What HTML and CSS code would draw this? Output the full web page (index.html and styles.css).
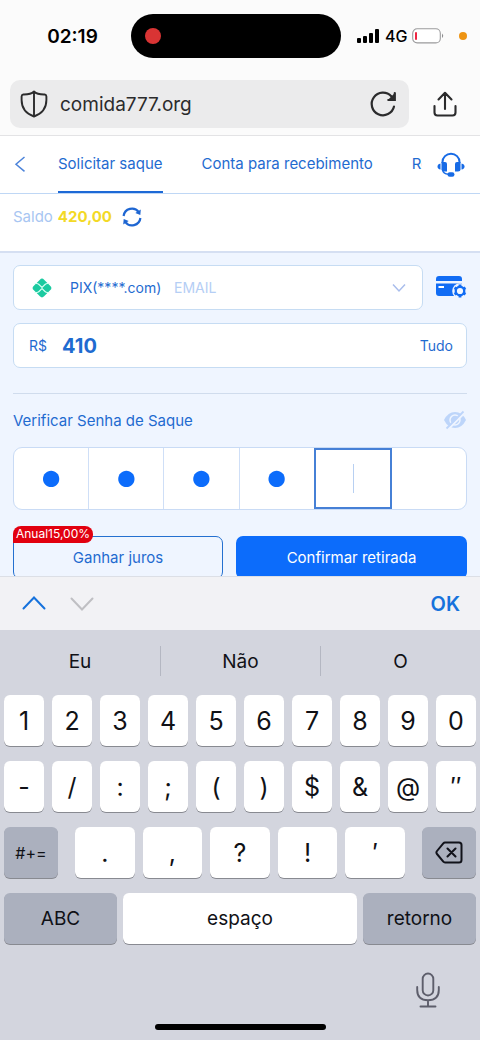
FILE: index.html
```html
<!DOCTYPE html>
<html lang="pt-BR">
<head>
<meta charset="utf-8">
<meta name="viewport" content="width=device-width, initial-scale=1">
<title>Solicitar saque</title>
<link rel="stylesheet" href="styles.css">
</head>
<body>
<div class="app">
  <header class="browser">
    <div class="status">
      <time class="clock">02:19</time>
      <div class="island"><span class="rec"></span></div>
      <div class="signals">
        <svg width="23" height="15" viewBox="0 0 23 15"><rect x="0" y="9" width="4" height="5" rx="1"/><rect x="6" y="7" width="4" height="7" rx="1"/><rect x="12" y="4" width="4" height="10" rx="1"/><rect x="18" y="0" width="4" height="14" rx="1"/></svg>
        <span class="network">4G</span>
        <svg width="32" height="16" viewBox="0 0 32 16"><rect x=".7" y=".7" width="27.6" height="14.2" rx="4.5" fill="#fff" stroke="#9a9a9c" stroke-width="1.1"/><rect x="3" y="4" width="2" height="8" rx="1" fill="#ee2643"/><path d="M30 5.500q2.400 2.300 0 4.600z" fill="#8d8d8f"/></svg>
        <span class="mic-dot"></span>
      </div>
    </div>
    <div class="address-row">
      <div class="address">
        <svg width="28" height="28" viewBox="0 0 28 28" fill="none" stroke="#2b2b2c" stroke-width="1.9" stroke-linejoin="round"><path d="M14 1.500C11.500 4 7.500 4.600 3.200 4.500Q1.600 4.700 1.600 6.500V10c0 8 4 13.500 12.400 16.500C22.400 23.500 26.400 18 26.400 10V6.500q0-1.800-1.600-2C20.500 4.600 16.500 4 14 1.500zM14 2v24"/></svg>
        <input class="url" type="text" value="comida777.org" aria-label="Endereço">
        <button class="icon-button" aria-label="Recarregar"><svg width="28" height="28" viewBox="0 0 28 28" fill="none" stroke="#2b2b2c" stroke-width="2.200" stroke-linecap="round"><path d="M25 16.500A11.300 11.300 0 1 1 22.300 6.300L25 9.300"/><path d="M25.800 3v7h-7z" fill="#2b2b2c" stroke="none"/><path d="M25.800 3v7h-6.500"/></svg></button>
      </div>
      <button class="icon-button" aria-label="Compartilhar"><svg width="24" height="28" viewBox="0 0 24 28" fill="none" stroke="#2b2b2c" stroke-width="2.100" stroke-linecap="round" stroke-linejoin="round"><path d="M12 19V3M5.500 9.500 12 2.800l6.500 6.700M1.500 16v6.500q0 3 3 3h15q3 0 3-3V16"/></svg></button>
    </div>
  </header>

  <nav class="tabs">
    <button class="back" aria-label="Voltar"><svg width="12" height="18" viewBox="0 0 12 18" fill="none" stroke="#4d84da" stroke-width="1.500"><path d="M10.500 1 2 8.200l8.500 7.200"/></svg></button>
    <div class="tab-list">
      <a class="tab active" href="#saque">Solicitar saque</a>
      <a class="tab" href="#conta">Conta para recebimento</a>
      <a class="tab" href="#re">Re</a>
    </div>
    <button class="support" aria-label="Suporte"><svg width="28" height="26" viewBox="0 0 28 26"><path d="M5.500 11V10a8.500 8.300 0 0 1 17 0v1" fill="none" stroke="#176be6" stroke-width="2"/><g fill="#176be6"><path d="M4.500 10H8q2 0 2 2v7.500H7q-2.500 0-2.500-2z"/><path d="M23.500 10H20q-2 0-2 2v7.500h3q2.500 0 2.500-2z"/><path d="M3.500 11.500v6Q.5 17 .5 14.500t3-3z"/><path d="M24.500 11.500v6q3-.5 3-3t-3-3z"/><rect x="10.500" y="20.300" width="7" height="4.400" rx="2.200"/></g><path d="M5.700 18q.3 4 6 4.300" fill="none" stroke="#176be6" stroke-width="1.500"/></svg></button>
  </nav>

  <section class="balance">
    <span>Saldo</span><strong>420,00</strong>
    <button class="icon-button" aria-label="Atualizar"><svg width="20" height="20" viewBox="0 0 20 20" fill="none" stroke="#1e66d2" stroke-width="2.200"><path d="M1.600 9A8.400 8.400 0 0 1 16.800 5.200M18.400 11A8.400 8.400 0 0 1 3.200 14.800"/><path d="m18.800 2.500-.5 5.500-5-2zM1.200 17.500l.5-5.500 5 2z" fill="#1e66d2" stroke="none"/></svg></button>
  </section>

  <main class="form">
    <div class="account-row">
      <label class="field account">
        <svg width="22" height="22" viewBox="0 0 22 22"><rect x="3.600" y="3.600" width="14.800" height="14.800" rx="3" fill="#1bcaa0" transform="rotate(45 11 11)"/><path d="M3.500 6.500h2q1.500 0 2.500 1l3 3 3-3q1-1 2.500-1h2M3.500 15.500h2q1.500 0 2.500-1l3-3 3 3q1 1 2.500 1h2" fill="none" stroke="#d8fff3" stroke-width="1.100"/></svg>
        <select aria-label="Conta"><option>PIX(****.com)</option></select>
        <span class="kind">EMAIL</span>
        <svg class="chevron" width="14" height="10" viewBox="0 0 14 10" fill="none" stroke="#a9bdec" stroke-width="1.500"><path d="m1 1.500 6 6.500 6-6.500"/></svg>
      </label>
      <button class="icon-button" aria-label="Gerenciar contas"><svg width="32" height="28" viewBox="0 0 32 28"><path d="M1 7V5q0-3 3-3h20q3 0 3 3v2zM1 9.500h26v6L20 22H4q-3 0-3-3z" fill="#116cf4"/><rect x="3.500" y="12" width="5.500" height="2" fill="#fff"/><circle cx="25" cy="17" r="7.800" fill="#eff5ff"/><circle cx="25" cy="17" r="5.400" fill="#116cf4"/><path d="M25 10.600v12.800M19.500 13.800l11 6.400M30.500 13.800l-11 6.400" stroke="#116cf4" stroke-width="2.800"/><circle cx="25" cy="17" r="3.100" fill="#f4f8ff"/></svg></button>
    </div>

    <div class="field amount">
      <label for="amount">R$</label>
      <input id="amount" type="text" value="410">
      <button class="all">Tudo</button>
    </div>

    <div class="password-head">
      <span id="pin-label">Verificar Senha de Saque</span>
      <button class="icon-button" aria-label="Mostrar senha"><svg width="24" height="22" viewBox="0 0 24 22"><path d="M1 10Q5 2 12 2t11 8q-4 8-11 8T1 10z" fill="#bdd5fa"/><circle cx="12" cy="10" r="5" fill="none" stroke="#eff5ff" stroke-width="1.500"/><path d="M5 19.500 22.500 2" stroke="#eff5ff" stroke-width="2"/><path d="M3.500 18.500 20.500 1.500" stroke="#bdd5fa" stroke-width="1.800"/></svg></button>
    </div>

    <div class="pin" role="group" aria-labelledby="pin-label">
      <label class="cell"><input type="password" maxlength="1" value="0" aria-label="Dígito 1"></label>
      <label class="cell"><input type="password" maxlength="1" value="0" aria-label="Dígito 2"></label>
      <label class="cell"><input type="password" maxlength="1" value="0" aria-label="Dígito 3"></label>
      <label class="cell"><input type="password" maxlength="1" value="0" aria-label="Dígito 4"></label>
      <label class="cell current"><input type="password" maxlength="1" aria-label="Dígito 5"><span class="caret"></span></label>
      <label class="cell"><input type="password" maxlength="1" aria-label="Dígito 6"></label>
    </div>

    <div class="actions">
      <div class="earn">
        <button class="action outline">Ganhar juros</button>
        <span class="badge">Anual15,00%</span>
      </div>
      <button class="action solid">Confirmar retirada</button>
    </div>
  </main>

  <section class="keyboard" aria-label="Teclado">
    <div class="toolbar">
      <button class="icon-button" aria-label="Anterior"><svg width="24" height="16" viewBox="0 0 24 16" fill="none" stroke="#1672dc" stroke-width="2" stroke-linecap="round"><path d="M1.500 12.500 12 1.500l10.500 11"/></svg></button>
      <button class="icon-button" aria-label="Próximo"><svg width="24" height="16" viewBox="0 0 24 16" fill="none" stroke="#bfbfc3" stroke-width="2" stroke-linecap="round"><path d="M1.500 2.500 12 13.500l10.500-11"/></svg></button>
      <button class="ok">OK</button>
    </div>
    <div class="suggestions"><button>Eu</button><button>Não</button><button>O</button></div>
    <div class="keys">
      <div class="row">
        <button>1</button><button>2</button><button>3</button><button>4</button><button>5</button><button>6</button><button>7</button><button>8</button><button>9</button><button>0</button>
      </div>
      <div class="row">
        <button>-</button><button>/</button><button>:</button><button>;</button><button>(</button><button>)</button><button>$</button><button>&amp;</button><button>@</button><button>″</button>
      </div>
      <div class="row punctuation">
        <button class="dark symbols">#+=</button>
        <div class="row middle"><button>.</button><button>,</button><button>?</button><button>!</button><button>′</button></div>
        <button class="dark" aria-label="Apagar"><svg width="28" height="24" viewBox="0 0 28 24" fill="none" stroke="#11121a" stroke-width="2" stroke-linecap="round" stroke-linejoin="round"><path d="M10 1.500H24q2.500 0 2.500 2.500v15q0 2.500-2.500 2.500H10q-1 0-1.700-.8L2 13q-1.200-1.500 0-3l6.300-7.700q.7-.8 1.700-.8zM12.500 7.500l8 8m0-8-8 8"/></svg></button>
      </div>
      <div class="row bottom">
        <button class="dark">ABC</button><button>espaço</button><button class="dark">retorno</button>
      </div>
    </div>
    <div class="dictation">
      <button class="icon-button" aria-label="Ditado"><svg width="24" height="36" viewBox="0 0 24 36" fill="none" stroke="#5d5e6b" stroke-width="1.900" stroke-linecap="round"><rect x="6.700" y="1.500" width="10.600" height="22" rx="5.300"/><path d="M1.200 15v3q0 10 10.800 10.300Q22.800 28 22.800 18v-3M12 28.500V34M4.500 34.500h15"/></svg></button>
    </div>
    <div class="home"></div>
  </section>
</div>
</body>
</html>
```
FILE: styles.css
```css
* { box-sizing: border-box; }
body { margin: 0; background: #d3d5de; font-family: Inter, "Liberation Sans", sans-serif; font-size: 15px; color: #1f6bd0; }
button, input, select { font: inherit; color: inherit; border: 0; padding: 0; margin: 0; background: none; outline: 0; min-width: 0; }
svg { display: block; flex: none; }
a { color: inherit; text-decoration: none; }

.app { display: flex; flex-direction: column; height: 100vh; }
.icon-button { flex: none; }

.browser { background: #fbfbfb; border-bottom: 1px solid #e3e3e5; color: #000; }
.status { display: grid; grid-template-columns: minmax(0, 131fr) 210px minmax(0, 139fr); align-items: center; padding-top: 14px; }
.clock { font-size: 19px; font-weight: 600; text-align: center; padding-left: 14px; }
.island { height: 44px; border-radius: 22px; background: #000; display: flex; align-items: center; padding-left: 14px; }
.rec { width: 16px; height: 16px; border-radius: 50%; background: #d93434; }
.signals { display: flex; align-items: center; gap: 5px; padding-left: 16px; }
.network { font-size: 16px; font-weight: 500; }
.mic-dot { width: 8px; height: 8px; border-radius: 50%; background: #ee9413; margin-left: 10px; flex: none; }
.address-row { display: flex; align-items: center; gap: 24px; padding: 22px 23px 7px 10px; }
.address { flex: 1; min-width: 0; height: 48px; border-radius: 10px; background: #ebebec; display: flex; align-items: center; gap: 12px; padding: 0 12px 0 10px; }
.url { flex: 1; font-size: 19px; color: #2b2b2c; }

.tabs { display: flex; height: 58px; background: #fff; border-bottom: 1px solid #bfd7f5; }
.back { width: 58px; padding-left: 14px; flex: none; }
.tab-list { flex: 1; min-width: 0; overflow: hidden; display: flex; gap: 39px; }
.tab { flex: none; line-height: 55px; border-bottom: 2px solid transparent; }
.active { border-color: #1d69d6; }
.support { flex: none; padding: 0 15px; }

.balance { display: flex; align-items: center; gap: 5px; height: 59px; padding: 0 13px 12px; background: #fff; border-bottom: 2px solid #d5dff2; color: #a8c6f2; }
.balance strong { color: #f3d926; font-weight: 700; margin-right: 5px; }

.form { flex: 1; min-height: 0; overflow: hidden; background: #eff5ff; padding: 12px 13px 0; }
.field { display: flex; align-items: center; height: 45px; border: 1px solid #c6dcf3; border-radius: 7px; background: #fff; font-size: 14px; }
.account-row { display: flex; gap: 12px; }
.account { flex: 1; padding: 0 16px 0 17px; }
.account select { appearance: none; margin: 0 12px 0 17px; }
.kind { color: #b5cef5; }
.chevron { margin-left: auto; }
.amount { margin-top: 13px; padding: 0 13px 0 15px; }
.amount input { flex: 1; margin-left: 15px; font-size: 20px; font-weight: 700; }
.password-head { margin-top: 25px; padding-top: 16px; border-top: 1px solid #d0dced; display: flex; justify-content: space-between; align-items: center; height: 54px; padding-bottom: 16px; }
.pin { display: flex; height: 63px; border: 1px solid #c9dbf5; border-radius: 9px; background: #fff; }
.cell { flex: 1; position: relative; display: flex; min-width: 0; }
.cell + .cell { border-left: 1px solid #cfdff7; }
.cell input { width: 100%; text-align: center; font-size: 52px; line-height: 56px; height: 56px; color: #0c6cfb; }
.cell.current { border: 2px solid #4680d6; }
.cell.current + .cell { border-left: 0; }
.caret { position: absolute; left: 50%; top: 25%; width: 1px; height: 50%; background: #b8d0f2; }
.actions { display: grid; grid-template-columns: 210fr 231fr; gap: 13px; margin-top: 26px; }
.earn { position: relative; }
.action { display: block; width: 100%; height: 43px; border-radius: 7px; }
.outline { border: 1px solid #2470d0; }
.solid { background: #0c6cfb; color: #fff; }
.badge { position: absolute; left: 0; top: -10px; height: 17px; line-height: 16px; padding: 0 3px; border-radius: 8px 8px 8px 0; background: #e2000f; color: #fff; font-size: 12px; }

.keyboard { flex: none; background: #d3d5de; color: #101116; }
.toolbar { display: flex; align-items: center; gap: 24px; height: 54px; padding: 0 20px 0 22px; background: #f2f2f5; border-top: 1px solid #dcdfe6; }
.ok { margin-left: auto; font-size: 20px; font-weight: 600; color: #1672dc; }
.suggestions { display: grid; grid-template-columns: repeat(3, 1fr); padding: 16px 0; }
.suggestions button { height: 30px; font-size: 19px; }
.suggestions button + button { border-left: 1px solid #b4b7c2; }
.keys { display: flex; flex-direction: column; gap: 15px; padding: 3px 4px 0; }
.row { display: flex; gap: 8px; }
.row button { flex: 1; height: 51px; border-radius: 6px; background: #fff; box-shadow: 0 1px 0 #888a91; font-size: 25px; }
.row .dark { background: #abb0be; display: flex; align-items: center; justify-content: center; }
.punctuation { display: grid; grid-template-columns: 54fr 330fr 54fr; gap: 17px; }
.row .symbols { font-size: 16px; }
.bottom { display: grid; grid-template-columns: 113fr 234fr 113fr; gap: 6px; }
.bottom button, .bottom .dark { font-size: 19px; }
.dictation { display: flex; justify-content: flex-end; padding: 28px 40px 0; }
.home { width: 171px; height: 6px; border-radius: 3px; background: #000; margin: 16px auto 10px; }
```
